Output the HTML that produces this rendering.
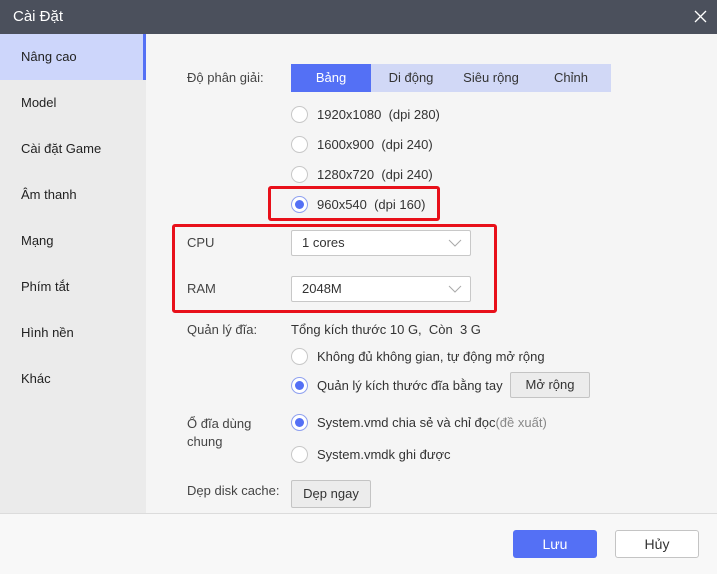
<!DOCTYPE html>
<html><head><meta charset="utf-8"><style>
*{margin:0;padding:0;box-sizing:border-box}
body{width:717px;height:574px;overflow:hidden;font-family:"Liberation Sans","Noto Sans CJK SC",sans-serif;font-size:13px;color:#333;background:#f5f5f5;position:relative}
.a{position:absolute}
.title{left:0;top:0;width:717px;height:34px;background:#4b505c;color:#fff;font-size:15px;line-height:34px;padding-left:13px}
.side{left:0;top:34px;width:146px;height:480px;background:#ebebeb}
.si{position:absolute;left:21px;font-size:13px;color:#222}
.act{left:0;top:34px;width:146px;height:46px;background:#cdd6fb;border-right:3px solid #5470f5}
.lbl{color:#444}
.tab{top:64px;height:28px;line-height:28px;text-align:center;background:#d1d8f6;color:#333}
.rad{width:17px;height:17px;border-radius:50%;border:1px solid #c8c8c8;background:#fff}
.rad.on{border:1px solid #8ea0f0}
.rad.on::after{content:"";position:absolute;left:3px;top:3px;width:9px;height:9px;border-radius:50%;background:#5470f5}
.sel{height:26px;width:180px;border:1px solid #c8c8c8;background:#fff;border-radius:2px;line-height:24px;padding-left:10px}
.sel svg{position:absolute;right:8px;top:8px}
.btn{border:1px solid #c4c4c4;background:#ececec;text-align:center;border-radius:2px}
.red{border:3px solid #e8101a;border-radius:3px}
</style></head><body>
<div class="a title">Cài Đặt</div>
<svg class="a" style="left:694px;top:10px" width="13" height="13" viewBox="0 0 13 13"><path d="M1 1L12 12M12 1L1 12" stroke="#fff" stroke-width="1.3"/></svg>
<div class="a side"></div>
<div class="a act"></div>
<div class="si" style="top:49px">Nâng cao</div>
<div class="si" style="top:95px">Model</div>
<div class="si" style="top:141px">Cài đặt Game</div>
<div class="si" style="top:187px">Âm thanh</div>
<div class="si" style="top:233px">Mạng</div>
<div class="si" style="top:279px">Phím tắt</div>
<div class="si" style="top:325px">Hình nền</div>
<div class="si" style="top:371px">Khác</div>

<div class="a lbl" style="left:187px;top:70px">Độ phân giải:</div>
<div class="a tab" style="left:291px;width:80px;background:#5470f5;color:#fff">Bảng</div>
<div class="a tab" style="left:371px;width:80px">Di động</div>
<div class="a tab" style="left:451px;width:80px">Siêu rộng</div>
<div class="a tab" style="left:531px;width:80px">Chỉnh</div>

<div class="a rad" style="left:291px;top:106px"></div><div class="a" style="left:317px;top:107px">1920x1080&nbsp; (dpi 280)</div>
<div class="a rad" style="left:291px;top:136px"></div><div class="a" style="left:317px;top:137px">1600x900&nbsp; (dpi 240)</div>
<div class="a rad" style="left:291px;top:166px"></div><div class="a" style="left:317px;top:167px">1280x720&nbsp; (dpi 240)</div>
<div class="a rad on" style="left:291px;top:196px"></div><div class="a" style="left:317px;top:197px">960x540&nbsp; (dpi 160)</div>
<div class="a red" style="left:268px;top:186px;width:172px;height:35px"></div>

<div class="a red" style="left:172px;top:224px;width:325px;height:89px"></div>
<div class="a lbl" style="left:187px;top:235px">CPU</div>
<div class="a sel" style="left:291px;top:230px">1 cores<svg width="14" height="8"><path d="M1 1L7 7L13 1" fill="none" stroke="#aaa"/></svg></div>
<div class="a lbl" style="left:187px;top:281px">RAM</div>
<div class="a sel" style="left:291px;top:276px">2048M<svg width="14" height="8"><path d="M1 1L7 7L13 1" fill="none" stroke="#aaa"/></svg></div>

<div class="a lbl" style="left:187px;top:322px">Quản lý đĩa:</div>
<div class="a" style="left:291px;top:322px">Tổng kích thước 10 G,&nbsp; Còn&nbsp; 3 G</div>
<div class="a rad" style="left:291px;top:348px"></div><div class="a" style="left:317px;top:349px">Không đủ không gian, tự động mở rộng</div>
<div class="a rad on" style="left:291px;top:377px"></div><div class="a" style="left:317px;top:378px">Quản lý kích thước đĩa bằng tay</div>
<div class="a btn" style="left:510px;top:372px;width:80px;height:26px;line-height:24px">Mở rộng</div>

<div class="a lbl" style="left:187px;top:415px;line-height:18px">Ổ đĩa dùng<br>chung</div>
<div class="a rad on" style="left:291px;top:414px"></div><div class="a" style="left:317px;top:415px">System.vmd chia sẻ và chỉ đọc<span style="color:#888">(đề xuất)</span></div>
<div class="a rad" style="left:291px;top:446px"></div><div class="a" style="left:317px;top:447px">System.vmdk ghi được</div>

<div class="a lbl" style="left:187px;top:483px">Dẹp disk cache:</div>
<div class="a btn" style="left:291px;top:480px;width:80px;height:28px;line-height:26px">Dẹp ngay</div>

<div class="a" style="left:0;top:513px;width:717px;height:61px;background:#f8f8f8;border-top:1px solid #dcdcdc"></div>
<div class="a" style="left:513px;top:530px;width:84px;height:28px;background:#5470f5;color:#fff;border-radius:3px;text-align:center;line-height:28px;font-size:14px">Lưu</div>
<div class="a" style="left:615px;top:530px;width:84px;height:28px;background:#fff;border:1px solid #c4c4c4;border-radius:3px;text-align:center;line-height:26px;font-size:14px">Hủy</div>
</body></html>
